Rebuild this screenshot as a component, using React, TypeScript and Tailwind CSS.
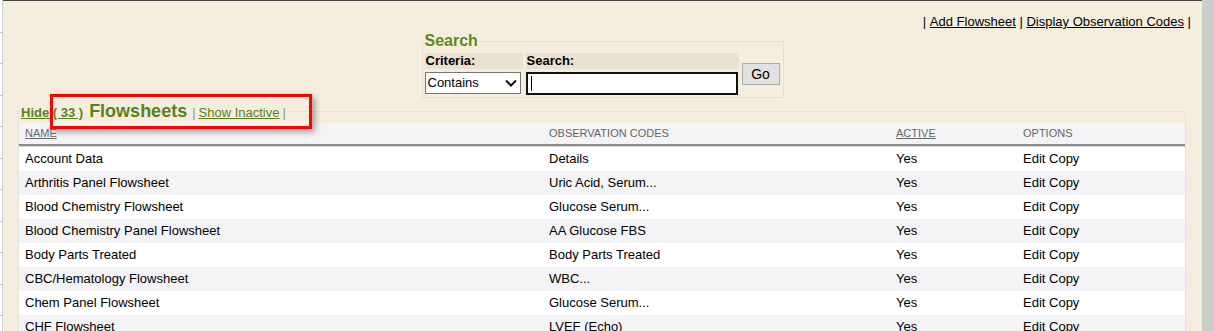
import React from 'react';

const rows = [
  { name: 'Account Data', codes: 'Details' },
  { name: 'Arthritis Panel Flowsheet', codes: 'Uric Acid, Serum...' },
  { name: 'Blood Chemistry Flowsheet', codes: 'Glucose Serum...' },
  { name: 'Blood Chemistry Panel Flowsheet', codes: 'AA Glucose FBS' },
  { name: 'Body Parts Treated', codes: 'Body Parts Treated' },
  { name: 'CBC/Hematology Flowsheet', codes: 'WBC...' },
  { name: 'Chem Panel Flowsheet', codes: 'Glucose Serum...' },
  { name: 'CHF Flowsheet', codes: 'LVEF (Echo)' },
];

const App: React.FC = () => {
  return (
    <div className="relative flex h-[331px] w-[1214px] overflow-hidden bg-[#cdcdcd] font-['Liberation_Sans',Arial,sans-serif] text-[13px] text-black">
      {/* left gutter */}
      <div className="flex w-[3px] flex-col border-r border-[#cfcfcf] bg-white pt-px">
        {Array.from({ length: 11 }).map((_, i) => (
          <div key={i} className="h-[31.5px] shrink-0 border-b border-[#c8c8c8]" />
        ))}
      </div>

      {/* main content */}
      <div className="flex w-[1199px] flex-col border-t border-[#444] bg-[#f5eedf]">
        {/* top links */}
        <div className="flex justify-end pr-[11px] pt-[13px] leading-4">
          <span>|&nbsp;</span>
          <a className="underline">Add Flowsheet</a>
          <span>&nbsp;|&nbsp;</span>
          <a className="underline">Display Observation Codes</a>
          <span>&nbsp;|</span>
        </div>

        {/* search */}
        <div className="mt-[2px] flex justify-center">
          <fieldset className="w-[362px] border border-[#e8e1d3] px-[2px] pb-[2px] pt-[3px]">
            <legend className="px-0 text-[16px] font-bold leading-[18px] text-[#5e8a1e]">Search</legend>
            <div className="flex items-center gap-[3px]">
              <div className="flex flex-col gap-[3px]">
                <div className="flex gap-[3px]">
                  <div className="h-4 w-[98px] bg-[#e9e1d1] pl-px font-bold leading-4">Criteria:</div>
                  <div className="h-4 w-[213px] bg-[#e9e1d1] pl-px font-bold leading-4">Search:</div>
                </div>
                <div className="flex gap-[3px]">
                  <div className="flex h-[22px] w-[96px] items-center justify-between border border-[#767676] bg-white pl-[2px] pr-[3px] text-[13px]">
                    <span>Contains</span>
                    <svg width="12" height="8" viewBox="0 0 12 8">
                      <path d="M1 1.5 L6 6.5 L11 1.5" fill="none" stroke="#111" strokeWidth="2" />
                    </svg>
                  </div>
                  <div className="ml-[2px] flex h-[23px] w-[212px] items-center border-2 border-[#111] bg-white pl-[3px]">
                    <span className="h-[15px] w-px bg-black" />
                  </div>
                </div>
              </div>
              <button className="h-[22px] w-[38px] border border-[#adadad] bg-[#e1e1e1] text-[14px] leading-none">Go</button>
            </div>
          </fieldset>
        </div>

        {/* flowsheets */}
        <fieldset className="ml-[15px] mt-[3px] w-[1168px] border border-[#e4e2dc] pt-0">
          <legend className="ml-[2px] flex items-baseline text-[#5a821c]">
            <a className="text-[13px] font-bold underline">Hide ( 33 )</a>
            <span className="ml-[6px] text-[18px] font-bold leading-[21px]">Flowsheets</span>
            <span className="ml-[5px] text-[13px] text-[#8a9a6a]">|</span>
            <a className="ml-[3px] text-[13px] underline">Show Inactive</a>
            <span className="ml-[3px] text-[13px] text-[#8a9a6a]">|</span>
          </legend>
          <div className="flex flex-col">
            <div className="grid h-[23px] grid-cols-[524px_347px_127px_1fr] items-center border-b-2 border-[#8c8c8c] bg-[#f4f4f6] text-[11px] text-[#666]">
              <span className="pl-[6px] underline">NAME</span>
              <span className="pl-[6px]">OBSERVATION CODES</span>
              <span className="pl-[6px] underline">ACTIVE</span>
              <span className="pl-[6px]">OPTIONS</span>
            </div>
            <div className="h-px bg-[#d8d8d8]" />
            {rows.map((r, i) => (
              <div
                key={r.name}
                className={`grid h-[24px] grid-cols-[524px_347px_127px_1fr] items-center ${i % 2 === 0 ? 'bg-white' : 'bg-[#f4f4f6]'}`}
              >
                <span className="pl-[6px]">{r.name}</span>
                <span className="pl-[6px]">{r.codes}</span>
                <span className="pl-[6px]">Yes</span>
                <span className="pl-[6px]">Edit Copy</span>
              </div>
            ))}
          </div>
        </fieldset>
      </div>

      {/* annotation box */}
      <div className="absolute left-[50px] top-[94px] h-[35px] w-[262px] border-[3px] border-[#ff0000] shadow-[3px_3px_6px_rgba(0,0,0,0.35)]" />
    </div>
  );
};

export default App;
